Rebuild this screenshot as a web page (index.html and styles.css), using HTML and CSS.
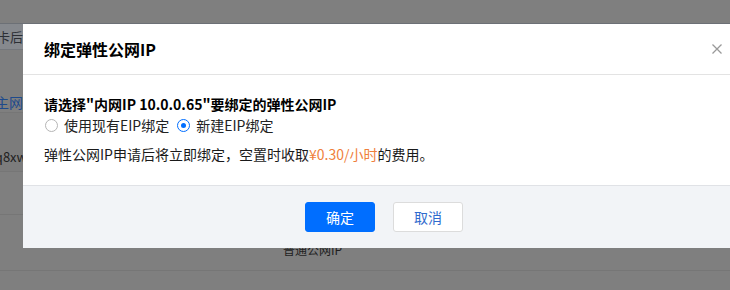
FILE: index.html
```html
<!DOCTYPE html>
<html lang="zh-CN">
<head>
<meta charset="utf-8">
<title>绑定弹性公网IP</title>
<link rel="stylesheet" href="styles.css">
</head>
<body>
<div class="page">
  <div class="bg-table">
    <div class="bg-head"><div class="bg-cell"><span>绑定网卡后</span></div></div>
    <div class="bg-row bg-row-1"><div class="bg-cell"><span class="bg-link">主网</span></div></div>
    <div class="bg-row bg-row-2"><div class="bg-cell bg-cell-id"><span>ins-q8xw</span></div></div>
    <div class="bg-row bg-row-3"></div>
    <div class="bg-row bg-row-4"><div class="bg-cell-wide"><span>普通公网IP</span></div></div>
  </div>

  <div class="modal">
    <div class="modal-header">
      <h3 class="modal-title">绑定弹性公网IP</h3>
      <span class="modal-close" aria-label="关闭">
        <svg width="10" height="10" viewBox="0 0 10 10"><path d="M0.5 0.5 L9.5 9.5 M9.5 0.5 L0.5 9.5" stroke="#999" stroke-width="1.3" fill="none"/></svg>
      </span>
    </div>
    <div class="modal-body">
      <p class="question">请选择"内网IP 10.0.0.65"要绑定的弹性公网IP</p>
      <div class="radio-group">
        <label class="radio"><span class="radio-dot"></span><span>使用现有EIP绑定</span></label>
        <label class="radio checked"><span class="radio-dot"></span><span>新建EIP绑定</span></label>
      </div>
      <p class="note">弹性公网IP申请后将立即绑定，空置时收取<span class="price">¥0.30/小时</span>的费用。</p>
    </div>
    <div class="modal-footer">
      <button class="btn btn-primary">确定</button>
      <button class="btn btn-weak">取消</button>
    </div>
  </div>
</div>
</body>
</html>
```

FILE: styles.css
```css
html, body {
  margin: 0;
  padding: 0;
}
body {
  width: 730px;
  height: 290px;
  overflow: hidden;
  background: #7f7f7f;
  font-family: "Noto Sans CJK SC", "Noto Sans", sans-serif;
}
.page {
  position: relative;
  width: 730px;
  height: 290px;
}
.bg-table {
  display: flex;
  flex-direction: column;
  padding-top: 23px;
}
.bg-head {
  height: 25px;
  border-top: 1px solid #6c7076;
  border-bottom: 1px solid #74777c;
  background: #86898e;
  display: flex;
  align-items: center;
}
.bg-cell {
  width: 23px;
  overflow: hidden;
  display: flex;
  justify-content: flex-end;
  white-space: nowrap;
  font-size: 13px;
  color: #2c2f35;
}
.bg-row {
  display: flex;
  align-items: center;
  border-bottom: 1px solid #767676;
}
.bg-row-1 {
  height: 62px;
  align-items: flex-start;
  background: #7f7f7f;
}
.bg-row-1 .bg-cell {
  margin-top: 42px;
}
.bg-link {
  color: #1e4a8c;
  font-size: 14px;
}
.bg-row-2 {
  height: 58px;
  background: #7c7c7c;
}
.bg-row-2 .bg-cell-id {
  width: 27px;
  color: #1f1f1f;
  font-size: 13px;
  margin-top: 28px;
}
.bg-row-3 {
  height: 42px;
}
.bg-row-4 {
  height: 55px;
  align-items: flex-start;
}
.bg-cell-wide {
  padding-left: 283px;
  padding-top: 26px;
  font-size: 12px;
  color: #1e1e1e;
  white-space: nowrap;
}

.modal {
  position: absolute;
  left: 23px;
  top: 24px;
  width: 722px;
  background: #fff;
  display: flex;
  flex-direction: column;
}
.modal-header {
  height: 50px;
  border-bottom: 1px solid #e3e3e3;
  display: flex;
  align-items: center;
  justify-content: space-between;
  padding: 0 23px 0 21px;
}
.modal-title {
  margin: 0;
  font-size: 16px;
  font-weight: bold;
  color: #000;
  line-height: 20px;
}
.modal-close {
  display: flex;
  width: 10px;
  height: 10px;
}
.modal-body {
  padding: 20px 21px 22px;
  display: flex;
  flex-direction: column;
}
.question {
  margin: 0;
  font-size: 14px;
  font-weight: bold;
  color: #000;
  line-height: 18px;
}
.radio-group {
  display: flex;
  align-items: center;
  gap: 7px;
  margin-top: 3px;
  height: 18px;
}
.radio {
  display: flex;
  align-items: center;
  gap: 6px;
  font-size: 14px;
  color: #222;
  line-height: 18px;
}
.radio-dot {
  width: 11px;
  height: 11px;
  border: 1px solid #b5b5b5;
  border-radius: 50%;
  display: flex;
  align-items: center;
  justify-content: center;
  margin-left: 1px;
  background: #fff;
}
.radio.checked .radio-dot {
  border-color: #006eff;
}
.radio.checked .radio-dot::after {
  content: "";
  width: 5px;
  height: 5px;
  border-radius: 50%;
  background: #006eff;
}
.note {
  margin: 11px 0 0;
  font-size: 14px;
  color: #1a1a1a;
  line-height: 18px;
}
.price {
  color: #ef7f3c;
}
.modal-footer {
  border-top: 1px solid #e0e2e6;
  background: #f2f4f7;
  padding: 16px 0 16px;
  display: flex;
  justify-content: center;
  gap: 18px;
}
.btn {
  width: 70px;
  height: 30px;
  font-family: inherit;
  font-size: 14px;
  border-radius: 3px;
  padding: 0;
  cursor: pointer;
}
.btn-primary {
  background: #006eff;
  border: 1px solid #006eff;
  color: #fff;
}
.btn-weak {
  background: #fff;
  border: 1px solid #dcdcdc;
  color: #2f6bce;
}
```
